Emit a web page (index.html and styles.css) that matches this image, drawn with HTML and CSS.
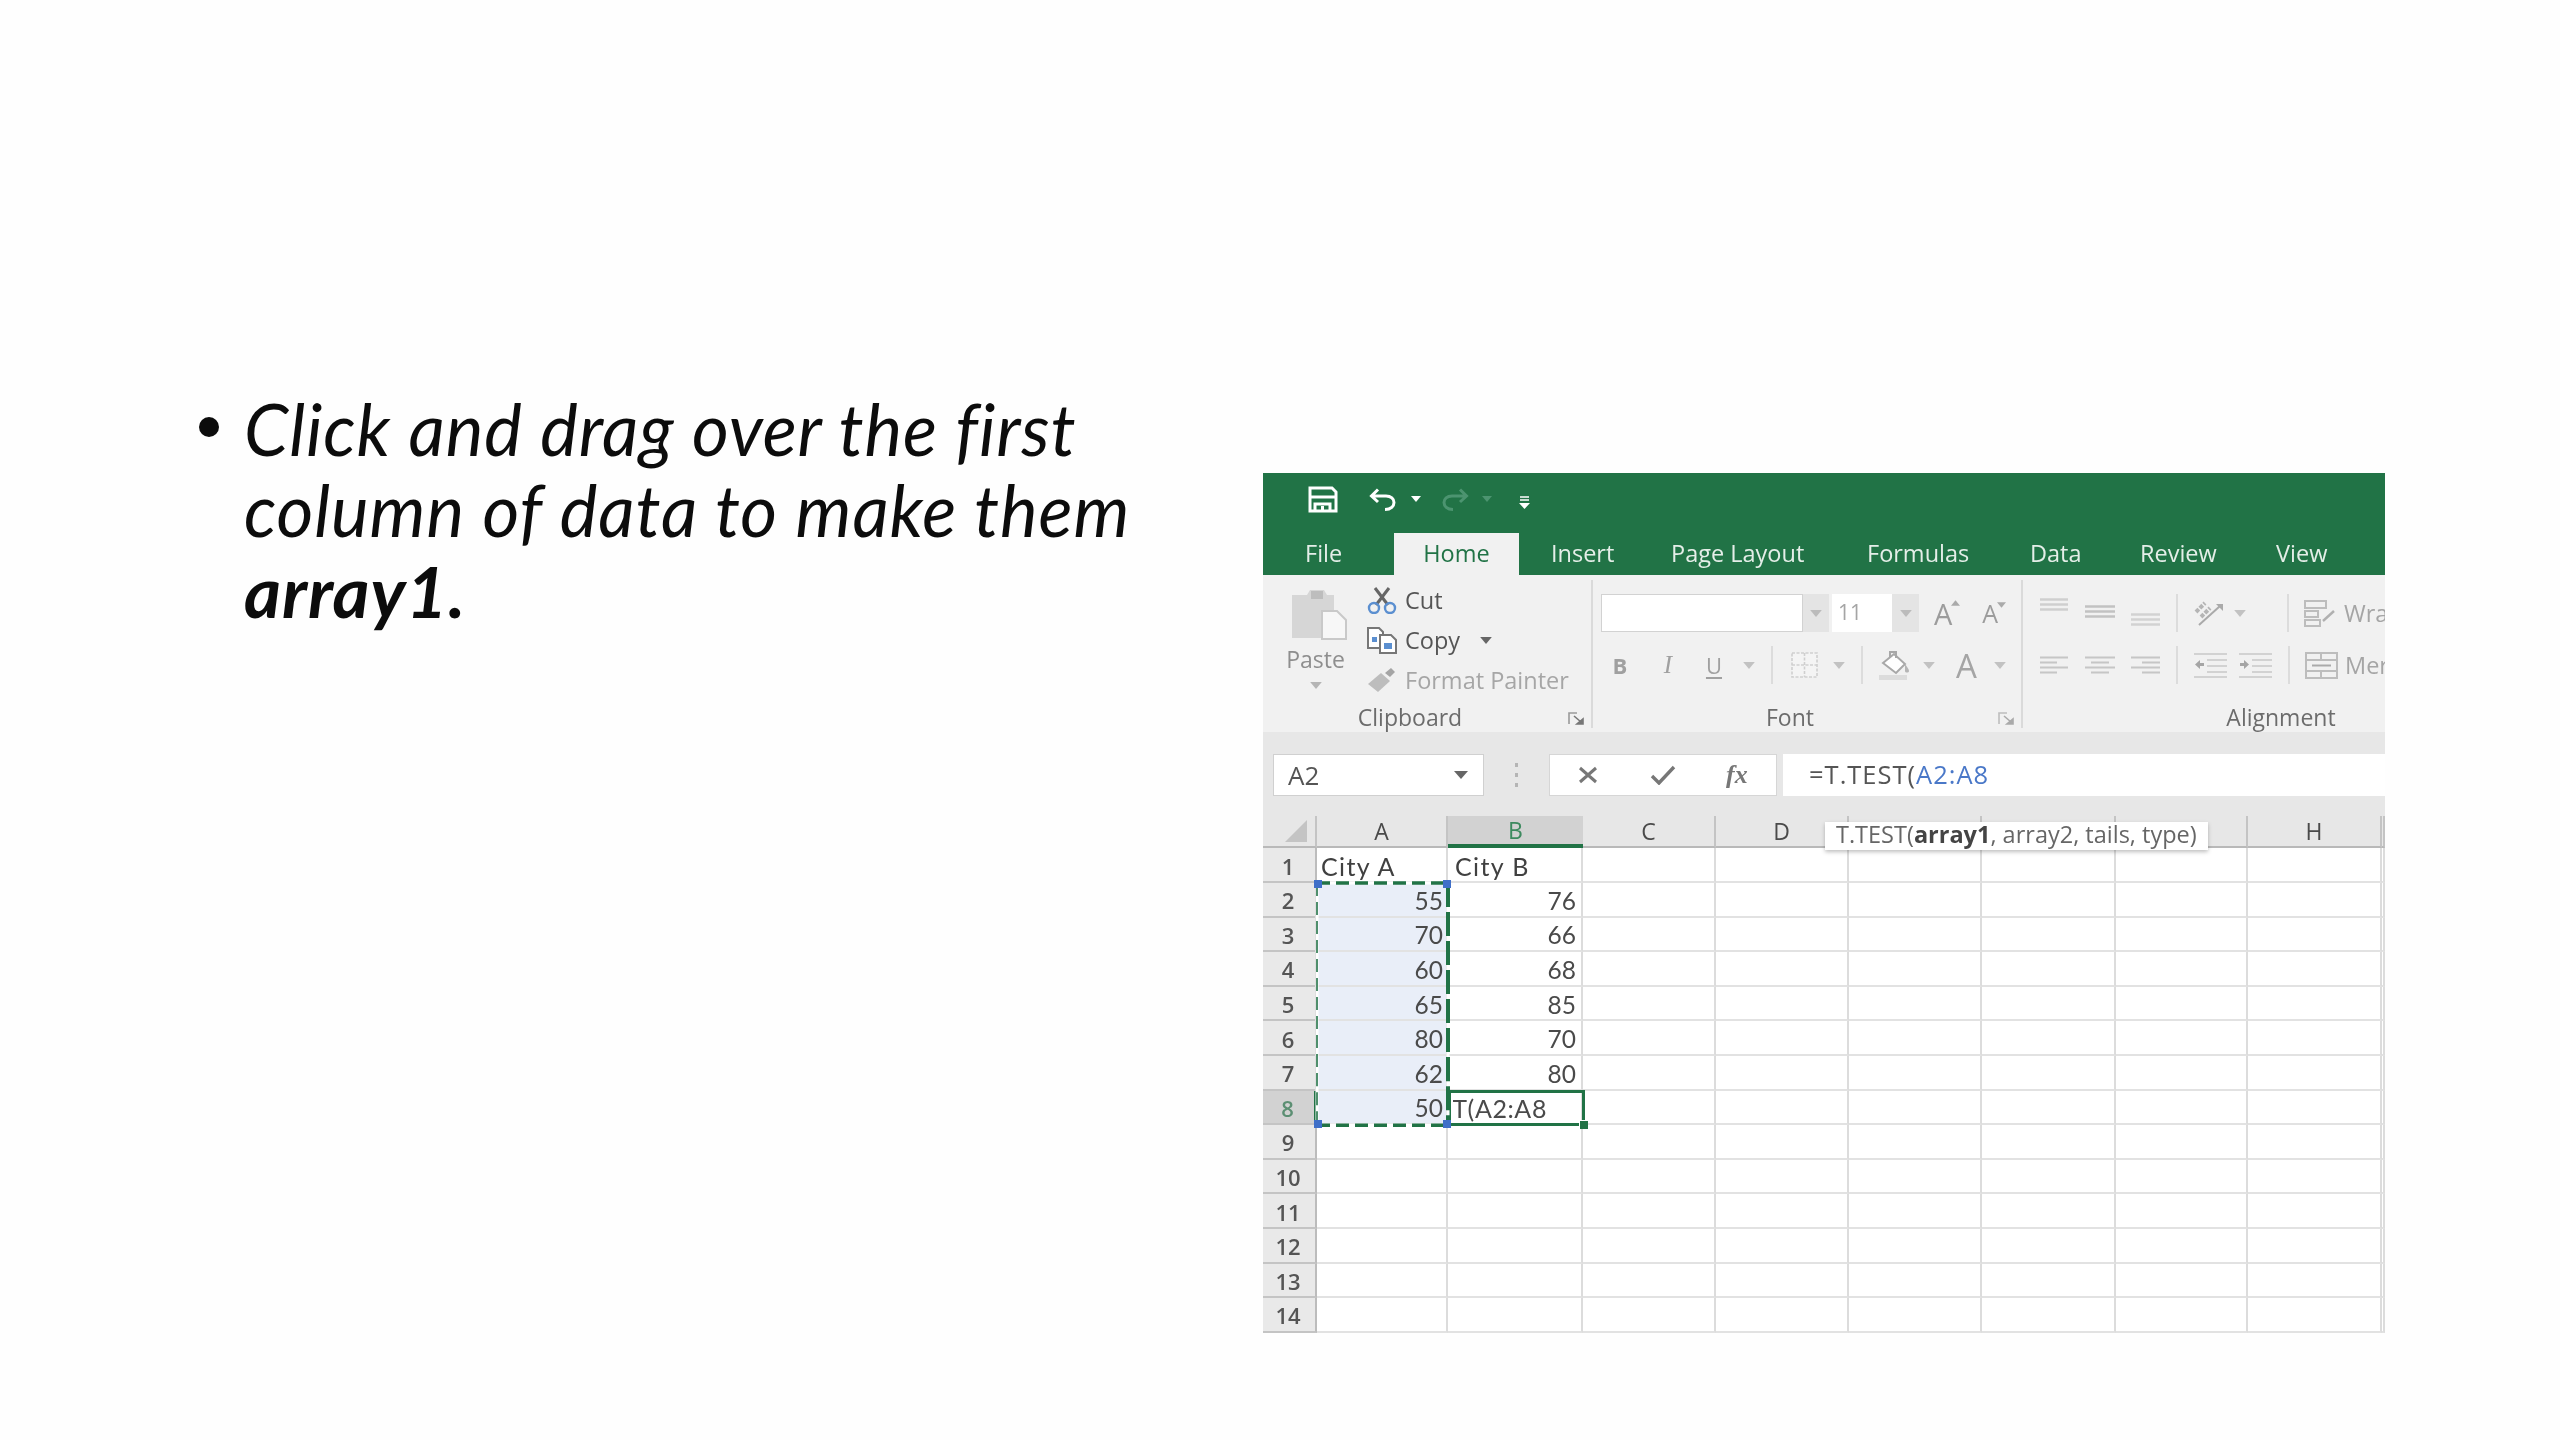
FILE: index.html
```html
<!DOCTYPE html>
<html lang="en">
<head>
<meta charset="utf-8">
<title>T.TEST</title>
<link rel="stylesheet" href="styles.css">
</head>
<body>
<main class="slide">
  <ul class="points">
    <li><em>Click and drag over the first column of data to make them <strong>array1.</strong></em></li>
  </ul>

  <section class="excel">
    <header class="titlebar">
      <svg class="qa-save" viewBox="0 0 30 27"><path d="M2 2h22l4 4v19H2z" fill="none" stroke="#fff" stroke-width="3"/><path d="M3 11h24" stroke="#fff" stroke-width="3"/><path d="M7 25v-7h15v7" fill="none" stroke="#fff" stroke-width="3"/><path d="M13 20h3v4h-3z" fill="#fff"/></svg>
      <svg class="qa-undo" viewBox="0 0 28 23"><path d="M9 1.5 2.5 8l6.500 6M3 8h14c5 0 8 3 8 6.500S22 21.500 16 21.500" fill="none" stroke="#fff" stroke-width="3"/></svg>
      <svg class="qa-chev" viewBox="0 0 10 6"><path d="M0 0h10L5 6z" fill="#fff"/></svg>
      <svg class="qa-redo" viewBox="0 0 28 23"><path d="M19 1.500 25.500 8 19 14M25 8H11C6 8 3 11 3 14.500S6 21.500 12 21.500" fill="none" stroke="#4c9470" stroke-width="3"/></svg>
      <svg class="qa-chev dim" viewBox="0 0 10 6"><path d="M0 0h10L5 6z" fill="#4c9470"/></svg>
      <svg class="qa-more" viewBox="0 0 11 13"><path d="M1 1h9M1 4h9" stroke="#fff" stroke-width="1.600"/><path d="M0 7h11l-5.500 6z" fill="#fff"/></svg>
    </header>

    <nav class="tabs">
      <span class="tab t-file">File</span>
      <span class="tab t-home">Home</span>
      <span class="tab t-insert">Insert</span>
      <span class="tab">Page Layout</span>
      <span class="tab">Formulas</span>
      <span class="tab">Data</span>
      <span class="tab">Review</span>
      <span class="tab">View</span>
    </nav>

    <div class="ribbon">
      <section class="group g-clip">
        <div class="group-body clip-body">
          <div class="paste">
            <svg class="paste-icon" viewBox="0 0 57 52"><path d="M1 7h15l3-5h14l3 5h7v43H1z" fill="#d6d6d6"/><path d="M20 3h12v8H20z" fill="#bdbdbd"/><path d="M31 23h15l9 9v19H31z" fill="#f7f7f7" stroke="#c9c9c9" stroke-width="2"/></svg>
            <span class="paste-label">Paste</span>
            <svg class="chev-s paste-chev" viewBox="0 0 10 6"><path d="M0 0h10L5 6z" fill="#b5b5b5"/></svg>
          </div>
          <div class="clip-tools">
            <div class="clip-row">
              <svg class="ic-cut" viewBox="0 0 30 28"><path d="M8 2 21 19M22 2 9 19" stroke="#666" stroke-width="3"/><circle cx="7" cy="22" r="5" fill="none" stroke="#5b8fd0" stroke-width="2.400"/><circle cx="23" cy="22" r="5" fill="none" stroke="#5b8fd0" stroke-width="2.400"/></svg>
              <span class="clip-text">Cut</span>
            </div>
            <div class="clip-row">
              <svg class="ic-copy" viewBox="0 0 32 28"><path d="M2 2h11l4 4v16H2z" fill="#fff" stroke="#777" stroke-width="2"/><path d="M14 9h11l5 5v13H14z" fill="#fff" stroke="#777" stroke-width="2"/><path d="M6 11h5v5H6zM18 17h8v6h-8z" fill="#5b8fd0"/></svg>
              <span class="clip-text">Copy</span>
              <svg class="chev-s copy-chev" viewBox="0 0 10 6"><path d="M0 0h10L5 6z" fill="#666"/></svg>
            </div>
            <div class="clip-row">
              <svg class="ic-painter" viewBox="0 0 30 26"><path d="M1 17 14 6l9 8-12 11z" fill="#bdbdbd"/><path d="M18 6 24 1l4 4-5 5z" fill="#a5a5a5"/></svg>
              <span class="clip-text off">Format Painter</span>
            </div>
          </div>
        </div>
        <div class="group-label"><span>Clipboard</span><svg class="launcher" viewBox="0 0 16 13"><path d="M1 12V1h8" fill="none" stroke="#9a9a9a" stroke-width="1.600"/><path d="m6 4 7 6M9 12h6V7z" stroke="#777" stroke-width="1.600" fill="#777"/></svg></div>
      </section>

      <section class="group g-font">
        <div class="group-body">
          <div class="tool-row">
            <span class="combo-name"></span><span class="combo-drop d1"><svg class="chev-s" viewBox="0 0 10 6"><path d="M0 0h10L5 6z" fill="#bbb"/></svg></span>
            <span class="combo-size">11</span><span class="combo-drop d2"><svg class="chev-s" viewBox="0 0 10 6"><path d="M0 0h10L5 6z" fill="#bbb"/></svg></span>
            <span class="grow a-big">A<svg class="tri" viewBox="0 0 10 6"><path d="M0 6h10L5 0z" fill="#aaa"/></svg></span>
            <span class="grow a-small">A<svg class="tri" viewBox="0 0 10 6"><path d="M0 0h10L5 6z" fill="#aaa"/></svg></span>
          </div>
          <div class="tool-row">
            <span class="fmt bold">B</span>
            <span class="fmt ital ml22">I</span>
            <span class="fmt under ml20">U</span>
            <svg class="chev-s ml16" viewBox="0 0 10 6"><path d="M0 0h10L5 6z" fill="#c2c2c2"/></svg>
            <span class="vsep ml16"></span>
            <svg class="ic-border ml18" viewBox="0 0 27 26"><path d="M1 1h25v24H1zM13.500 1v24M1 13h25" fill="#f4f4f4" stroke="#cfcfcf" stroke-width="1.600" stroke-dasharray="3 1.500"/></svg>
            <svg class="chev-s ml15" viewBox="0 0 10 6"><path d="M0 0h10L5 6z" fill="#c2c2c2"/></svg>
            <span class="vsep ml16"></span>
            <svg class="ic-bucket ml16" viewBox="0 0 33 30"><path d="m4 13 11-9 11 10-9 9z" fill="#fff" stroke="#a8a8a8" stroke-width="2"/><path d="M11 7V2h6v6" fill="none" stroke="#a8a8a8" stroke-width="2"/><path d="M26 14c2 3 4 5 4 7s-4 2-4 0z" fill="#b5b5b5"/><path d="M0 25h28v5H0z" fill="#dcdcdc"/></svg>
            <svg class="chev-s ml11" viewBox="0 0 10 6"><path d="M0 0h10L5 6z" fill="#c2c2c2"/></svg>
            <span class="color-a ml21">A</span>
            <svg class="chev-s ml17" viewBox="0 0 10 6"><path d="M0 0h10L5 6z" fill="#c2c2c2"/></svg>
          </div>
        </div>
        <div class="group-label"><span>Font</span><svg class="launcher" viewBox="0 0 16 13"><path d="M1 12V1h8" fill="none" stroke="#bdbdbd" stroke-width="1.600"/><path d="m6 4 7 6M9 12h6V7z" stroke="#aaa" stroke-width="1.600" fill="#aaa"/></svg></div>
      </section>

      <section class="group g-align">
        <div class="group-body">
          <div class="tool-row">
            <svg class="ic-v1 ml17" viewBox="0 0 28 14"><path d="M0 1.500h28M0 6.500h28M0 11.500h28" stroke="#cfcfcf" stroke-width="2.400"/></svg>
            <svg class="ic-v2 ml17" viewBox="0 0 30 14"><path d="M0 1.500h30M0 6.500h30M0 11.500h30" stroke="#c2c2c2" stroke-width="2.400"/></svg>
            <svg class="ic-v3 ml16" viewBox="0 0 29 14"><path d="M0 1.500h29M0 6.500h29M0 11.500h29" stroke="#d2d2d2" stroke-width="2.400"/></svg>
            <span class="vsep ml16"></span>
            <svg class="ic-orient ml16" viewBox="0 0 31 26"><path d="M5 25 26 6" stroke="#aaa" stroke-width="2"/><path d="M22 4h7v7z" fill="#aaa"/><path d="m2 12 9-9M7 17l9-9" stroke="#b5b5b5" stroke-width="4" stroke-dasharray="4 1.500"/></svg>
            <svg class="chev-s ml9" viewBox="0 0 10 6"><path d="M0 0h10L5 6z" fill="#c2c2c2"/></svg>
            <span class="vsep ml41"></span>
            <svg class="ic-wrap ml15" viewBox="0 0 33 27"><path d="M1 1h21v7H1zM1 11h13v6H1zM1 20h15v6H1z" fill="none" stroke="#bdbdbd" stroke-width="2"/><path d="m19 21 11-10" stroke="#b0b0b0" stroke-width="2.400"/></svg>
            <span class="wrap-text">Wrap Text</span>
          </div>
          <div class="tool-row">
            <svg class="ic-v1 ml17" viewBox="0 0 28 19"><path d="M0 1.500h28M0 6.500h17M0 11.500h28M0 16.500h17" stroke="#c6c6c6" stroke-width="2.200"/></svg>
            <svg class="ic-v2 ml17" viewBox="0 0 30 19"><path d="M0 1.500h30M6 6.500h18M0 11.500h30M6 16.500h18" stroke="#c6c6c6" stroke-width="2.200"/></svg>
            <svg class="ic-v3 ml16" viewBox="0 0 29 19"><path d="M0 1.500h29M11 6.500h18M0 11.500h29M11 16.500h18" stroke="#c6c6c6" stroke-width="2.200"/></svg>
            <span class="vsep ml16"></span>
            <svg class="ic-indent ml16" viewBox="0 0 33 25"><path d="M0 1h33M13 7h20M13 13h20M13 19h20M0 24h33" stroke="#d2d2d2" stroke-width="2"/><path d="M1 11.500 6 7v3h4v3H6v3z" fill="#a5a5a5"/></svg>
            <svg class="ic-indent ml12" viewBox="0 0 33 25"><path d="M0 1h33M13 7h20M13 13h20M13 19h20M0 24h33" stroke="#d2d2d2" stroke-width="2"/><path d="M10 11.500 5 7v3H1v3h4v3z" fill="#a5a5a5"/></svg>
            <span class="vsep ml16"></span>
            <svg class="ic-wrap ml15" viewBox="0 0 33 27"><path d="M1 1h31v25H1zM1 8h31M1 19h31M16 1v7M16 19v7" fill="none" stroke="#bdbdbd" stroke-width="2"/><path d="M7 13.500h19" stroke="#aaa" stroke-width="2"/></svg>
            <span class="wrap-text">Merge</span>
          </div>
        </div>
        <div class="group-label"><span>Alignment</span></div>
      </section>
    </div>

    <div class="formula-band">
      <div class="namebox"><span>A2</span><svg class="name-chev" viewBox="0 0 14 8"><path d="M0 0h14L7 8z" fill="#666"/></svg></div>
      <div class="dots"><b></b><b></b><b></b></div>
      <div class="fx-box">
        <svg class="fx-x" viewBox="0 0 20 18"><path d="m2 2 16 14M18 2 2 16" stroke="#777" stroke-width="3"/></svg>
        <svg class="fx-check" viewBox="0 0 26 20"><path d="m2 11 7 7L24 2" fill="none" stroke="#777" stroke-width="3.400"/></svg>
        <span class="fx-label">fx</span>
      </div>
      <div class="formula-input">=T.TEST(<span class="ref">A2:A8</span></div>
    </div>

    <div class="sheet">
      <div class="corner"><svg class="corner-tri" viewBox="0 0 24 24"><path d="M24 0v24H0z" fill="#c4c4c4"/></svg></div>
      <div class="col">A</div><div class="col active-col">B</div><div class="col">C</div><div class="col">D</div><div class="col"></div><div class="col"></div><div class="col"></div><div class="col">H</div><div class="col"></div>

      <div class="row">1</div><div class="c txt">City A</div><div class="c txt">City B</div><div class="c"></div><div class="c"></div><div class="c"></div><div class="c"></div><div class="c"></div><div class="c"></div><div class="c"></div>
      <div class="row">2</div><div class="c num sel">55</div><div class="c num">76</div><div class="c"></div><div class="c"></div><div class="c"></div><div class="c"></div><div class="c"></div><div class="c"></div><div class="c"></div>
      <div class="row">3</div><div class="c num sel">70</div><div class="c num">66</div><div class="c"></div><div class="c"></div><div class="c"></div><div class="c"></div><div class="c"></div><div class="c"></div><div class="c"></div>
      <div class="row">4</div><div class="c num sel">60</div><div class="c num">68</div><div class="c"></div><div class="c"></div><div class="c"></div><div class="c"></div><div class="c"></div><div class="c"></div><div class="c"></div>
      <div class="row">5</div><div class="c num sel">65</div><div class="c num">85</div><div class="c"></div><div class="c"></div><div class="c"></div><div class="c"></div><div class="c"></div><div class="c"></div><div class="c"></div>
      <div class="row">6</div><div class="c num sel">80</div><div class="c num">70</div><div class="c"></div><div class="c"></div><div class="c"></div><div class="c"></div><div class="c"></div><div class="c"></div><div class="c"></div>
      <div class="row">7</div><div class="c num sel">62</div><div class="c num">80</div><div class="c"></div><div class="c"></div><div class="c"></div><div class="c"></div><div class="c"></div><div class="c"></div><div class="c"></div>
      <div class="row active-row">8</div><div class="c num sel">50</div><div class="c edit"><span class="edit-clip"><span>T(A2:A8</span></span></div><div class="c"></div><div class="c"></div><div class="c"></div><div class="c"></div><div class="c"></div><div class="c"></div><div class="c"></div>
      <div class="row">9</div><div class="c"></div><div class="c"></div><div class="c"></div><div class="c"></div><div class="c"></div><div class="c"></div><div class="c"></div><div class="c"></div><div class="c"></div>
      <div class="row">10</div><div class="c"></div><div class="c"></div><div class="c"></div><div class="c"></div><div class="c"></div><div class="c"></div><div class="c"></div><div class="c"></div><div class="c"></div>
      <div class="row">11</div><div class="c"></div><div class="c"></div><div class="c"></div><div class="c"></div><div class="c"></div><div class="c"></div><div class="c"></div><div class="c"></div><div class="c"></div>
      <div class="row">12</div><div class="c"></div><div class="c"></div><div class="c"></div><div class="c"></div><div class="c"></div><div class="c"></div><div class="c"></div><div class="c"></div><div class="c"></div>
      <div class="row">13</div><div class="c"></div><div class="c"></div><div class="c"></div><div class="c"></div><div class="c"></div><div class="c"></div><div class="c"></div><div class="c"></div><div class="c"></div>
      <div class="row">14</div><div class="c"></div><div class="c"></div><div class="c"></div><div class="c"></div><div class="c"></div><div class="c"></div><div class="c"></div><div class="c"></div><div class="c"></div>

      <div class="active-box"><i class="fill-handle"></i></div>
      <div class="ants">
        <svg class="ants-svg" viewBox="0 0 137 248" preserveAspectRatio="none">
          <rect x="3" y="3" width="131" height="242" fill="none" stroke="#fff" stroke-width="3"/>
          <path d="M3 3H134" fill="none" stroke="#217346" stroke-width="3.500" stroke-dasharray="13 6"/>
          <path d="M3 245H134" fill="none" stroke="#217346" stroke-width="3.500" stroke-dasharray="13 6"/>
          <path d="M3 3V245" fill="none" stroke="#4f8f6c" stroke-width="2" stroke-dasharray="13 6"/>
          <path d="M134 3V245" fill="none" stroke="#217346" stroke-width="4" stroke-dasharray="24 5"/>
        </svg>
        <i class="handle h-tl"></i><i class="handle h-tr"></i><i class="handle h-bl"></i><i class="handle h-br"></i>
      </div>
    </div>

    <div class="tooltip">T.TEST(<b>array1</b>, array2, tails, type)</div>
  </section>
</main>
</body>
</html>
```

FILE: styles.css
```css
* { box-sizing: border-box; }
html, body { margin: 0; padding: 0; background: #fff; }
body { width: 2560px; height: 1440px; overflow: hidden; }

.slide {
  display: flex;
  align-items: flex-start;
  height: 1440px;
  padding-left: 199px;
  background: #fefefe;
}

.points {
  width: 957px;
  margin: 388px 0 0;
  padding: 0;
  list-style: none;
  font-family: "Lato", "Liberation Sans", sans-serif;
  font-size: 71px;
  line-height: 81px;
  letter-spacing: .9px;
  color: #0c0c0c;
  filter: blur(.6px);
}
.points li { display: flex; gap: 25px; }
.points li::before {
  content: "";
  flex: none;
  width: 20px;
  height: 20px;
  margin-top: 29px;
  border-radius: 50%;
  background: #0c0c0c;
}
.points strong { font-weight: 700; }

.excel {
  position: relative;
  flex: none;
  width: 1122px;
  height: 860px;
  margin: 473px 0 0 107px;
  overflow: hidden;
  background: #fff;
  font-family: "Open Sans", "Liberation Sans", sans-serif;
  filter: blur(.75px);
}

/* title bar */
.titlebar {
  display: flex;
  align-items: center;
  height: 60px;
  padding: 0 0 8px 45px;
  background: #217346;
}
.qa-save { width: 30px; height: 27px; }
.qa-undo { width: 28px; height: 23px; margin-left: 31px; }
.qa-chev { width: 10px; height: 6px; margin-left: 14px; }
.qa-redo { width: 28px; height: 23px; margin-left: 20px; }
.qa-chev.dim { margin-left: 13px; }
.qa-more { width: 11px; height: 13px; margin-left: 27px; margin-top: 6px; }

/* tabs */
.tabs {
  display: grid;
  grid-template-columns: 131px 125px 152px 196px 163px 110px 136px 109px;
  height: 42px;
  background: #217346;
  font-size: 23.500px;
  color: #e4eee8;
}
.tab { display: flex; align-items: center; padding-bottom: 2px; white-space: nowrap; }
.t-file { padding-left: 42px; }
.t-home {
  justify-content: center;
  background: #f1f1f1;
  color: #217346;
}
.t-insert { padding-left: 32px; }

/* ribbon */
.ribbon {
  display: flex;
  height: 157px;
  padding-top: 5px;
  background: #f1f1f1;
}
.group {
  display: flex;
  flex: none;
  flex-direction: column;
  height: 150px;
  background: linear-gradient(#dadada, #dadada) right top / 2px 148px no-repeat;
}
.g-clip { width: 330px; }
.g-font { width: 430px; padding-left: 8px; }
.g-align { width: 516px; background: none; }
.group-body { flex: 1; min-height: 0; padding-top: 14px; }
.clip-body { display: flex; padding-top: 0; }
.group-label {
  display: flex;
  flex: none;
  align-items: center;
  height: 34px;
  padding-top: 8px;
  font-size: 23px;
  line-height: 26px;
  color: #6c6c6c;
}
.group-label span { flex: 1; text-align: center; }
.g-font .group-label { margin-left: -8px; }
.launcher { flex: none; width: 16px; height: 13px; margin: 2px 9px 0 11px; }

.paste { display: flex; flex-direction: column; align-items: center; width: 103px; padding: 8px 0 0 2px; }
.paste-icon { width: 57px; height: 52px; margin-left: 8px; }
.paste-label { margin-top: 5px; font-size: 23px; line-height: 28px; color: #8e8e8e; }
.paste-chev { margin-top: 9px; }
.chev-s { flex: none; width: 12px; height: 7px; }

.clip-tools { display: flex; flex-direction: column; }
.clip-row { display: flex; flex: none; align-items: center; height: 40px; font-size: 23.500px; color: #555; }
.clip-row > svg:first-child { width: 32px; flex: none; }
.ic-cut { height: 28px; }
.ic-copy { height: 28px; }
.ic-painter { height: 26px; }
.clip-text { margin-left: 7px; white-space: nowrap; }
.clip-text.off { color: #a6a6a6; }
.copy-chev { margin-left: 20px; }

.tool-row { display: flex; align-items: center; height: 38px; margin-bottom: 14px; white-space: nowrap; }

.combo-name { width: 202px; height: 38px; background: #fff; border: 1px solid #d2d2d2; }
.combo-drop { display: flex; align-items: center; justify-content: center; width: 26px; height: 38px; background: #e4e4e4; }
.d2 { width: 27px; }
.combo-size { width: 60px; height: 38px; margin-left: 3px; padding-left: 6px; background: #fff; font-size: 21px; line-height: 36px; color: #a5a5a5; }
.grow { display: flex; align-items: flex-start; color: #9c9c9c; line-height: 1; }
.a-big { margin-left: 15px; font-size: 29px; }
.a-small { margin-left: 22px; font-size: 25px; }
.tri { width: 9px; height: 6px; margin: 1px 0 0 -1px; }

.fmt { width: 26px; text-align: center; font-size: 22px; color: #a0a0a0; }
.bold { margin-left: 6px; font-weight: 700; }
.ital { font-style: italic; font-family: "Liberation Serif", serif; font-size: 25px; }
.under { text-decoration: underline; text-underline-offset: 3px; }
.color-a { width: 21px; font-size: 33px; line-height: 1; color: #a5a5a5; }
.vsep { flex: none; width: 2px; height: 38px; background: #dcdcdc; }

.ml9 { margin-left: 9px; } .ml11 { margin-left: 11px; } .ml12 { margin-left: 12px; }
.ml15 { margin-left: 15px; } .ml16 { margin-left: 16px; } .ml17 { margin-left: 17px; }
.ml18 { margin-left: 18px; } .ml20 { margin-left: 20px; } .ml21 { margin-left: 21px; }
.ml22 { margin-left: 22px; } .ml41 { margin-left: 41px; }

.ic-border { width: 27px; height: 26px; flex: none; }
.ic-bucket { width: 33px; height: 30px; flex: none; }
.ic-v1 { width: 28px; flex: none; }
.ic-v2 { width: 30px; flex: none; }
.ic-v3 { width: 29px; flex: none; }
.tool-row:first-child .ic-v1 { height: 14px; margin-top: -16px; }
.tool-row:first-child .ic-v2 { height: 14px; margin-top: -2px; }
.tool-row:first-child .ic-v3 { height: 14px; margin-top: 14px; }
.ic-orient { width: 31px; height: 26px; flex: none; }
.ic-wrap { width: 33px; height: 27px; flex: none; }
.ic-indent { width: 33px; height: 25px; flex: none; }
.wrap-text { margin-left: 7px; font-size: 23.500px; color: #a5a5a5; }

/* formula bar */
.formula-band {
  display: flex;
  height: 84px;
  padding: 22px 0 20px 10px;
  background: #e7e7e7;
}
.namebox {
  display: flex;
  align-items: center;
  width: 211px;
  padding-left: 14px;
  background: #fff;
  border: 1px solid #d0d0d0;
  font-size: 26px;
  color: #555;
}
.namebox span { flex: 1; }
.name-chev { width: 14px; height: 8px; margin-right: 15px; }
.dots { display: flex; flex-direction: column; justify-content: center; gap: 6px; width: 65px; align-items: center; }
.dots b { width: 3px; height: 4px; background: #b5b5b5; }
.fx-box {
  display: flex;
  align-items: center;
  width: 228px;
  padding-left: 28px;
  background: #fff;
  border: 1px solid #d6d6d6;
}
.fx-x { width: 20px; height: 18px; }
.fx-check { width: 26px; height: 20px; margin-left: 52px; }
.fx-label { margin-left: 50px; font-family: "Liberation Serif", serif; font-style: italic; font-weight: 700; font-size: 26px; color: #777; }
.formula-input {
  flex: 1;
  margin-left: 6px;
  padding-left: 26px;
  background: #fff;
  font-size: 25.500px;
  letter-spacing: 1px;
  line-height: 40px;
  color: #555;
}
.ref { color: #4a78c8; }

/* sheet */
.sheet {
  position: relative;
  display: grid;
  grid-template-columns: 54px 131px 135px 133px 133px 133px 134px 132px 134px 3px;
  grid-template-rows: 32px 35px repeat(13, 34.600px);
  font-family: "Lato", "Liberation Sans", sans-serif;
  font-size: 24.500px;
  color: #4a4a4a;
}
.corner, .col {
  background: #e7e7e7;
  border-bottom: 2px solid #b9b9b9;
  border-right: 2px solid #c4c4c4;
}
.corner { display: flex; align-items: center; justify-content: flex-end; padding-right: 8px; }
.corner-tri { width: 22px; height: 22px; }
.col {
  display: flex;
  align-items: center;
  justify-content: center;
  font-family: "Open Sans", "Liberation Sans", sans-serif;
  font-size: 23px;
  color: #4a4a4a;
}
.active-col {
  background: #d2d2d2;
  border-right: 0;
  border-bottom: 4px solid #217346;
  color: #3d8a5f;
}
.row {
  display: flex;
  align-items: center;
  justify-content: center;
  padding: 2px 2px 0 0;
  background: #e9e9e9;
  border-bottom: 2px solid #c4c4c4;
  border-right: 2px solid #bcbcbc;
  font-family: "Open Sans", "Liberation Sans", sans-serif;
  font-weight: 600;
  font-size: 22px;
  color: #555;
}
.active-row { background: #d2d2d2; color: #5c8f73; border-right: 3px solid #217346; }
.c {
  display: flex;
  align-items: center;
  min-width: 0;
  padding-top: 2px;
  overflow: hidden;
  border-right: 2px solid #dcdcdc;
  border-bottom: 2px solid #e2e2e2;
  white-space: nowrap;
}
.txt { padding-left: 4px; font-size: 25px; letter-spacing: 1.400px; color: #404040; }
.txt + .txt { padding-left: 7px; }
.num { justify-content: flex-end; padding-right: 5px; }
.sel { background: #e9eef8; padding-right: 3px; }

.edit-clip {
  display: flex;
  justify-content: flex-end;
  width: 94px;
  margin-left: 5px;
  overflow: hidden;
  font-size: 25px;
  letter-spacing: .6px;
}
.edit { color: #4a4a4a; }

.active-box {
  position: absolute;
  grid-column: 3 / 4;
  grid-row: 9 / 10;
  inset: -1px -2px -1px 0;
  border: 3px solid #217346;
}
.fill-handle {
  position: absolute;
  right: -6px;
  bottom: -6px;
  width: 9px;
  height: 9px;
  background: #217346;
  border-left: 1px solid #fff;
  border-top: 1px solid #fff;
}
.ants {
  position: absolute;
  grid-column: 2 / 3;
  grid-row: 3 / 10;
  inset: -3px;
}
.ants-svg { display: block; width: 100%; height: 100%; }
.handle { position: absolute; width: 8px; height: 8px; background: #3f6fc8; }
.h-tl { left: 0; top: 0; }
.h-tr { right: 0; top: 0; }
.h-bl { left: 0; bottom: 0; }
.h-br { right: 0; bottom: 0; }

.tooltip {
  position: absolute;
  left: 562px;
  top: 349px;
  width: 383px;
  height: 28px;
  padding-left: 11px;
  background: #fff;
  box-shadow: 0 2px 4px rgba(0, 0, 0, .25);
  font-size: 23.500px;
  line-height: 24px;
  white-space: nowrap;
  color: #666;
}
.tooltip b { color: #444; }
```
